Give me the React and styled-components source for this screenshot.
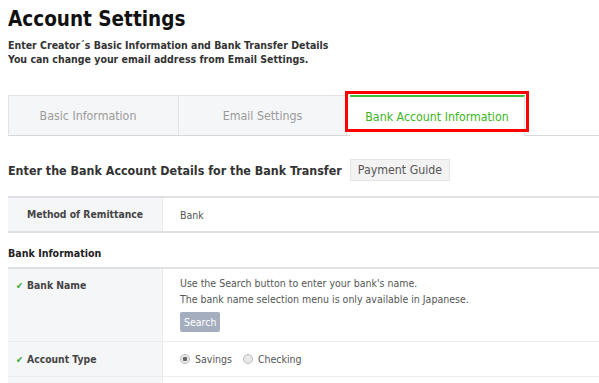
import React from "react";
import styled, { createGlobalStyle } from "styled-components";

const Global = createGlobalStyle`
  body {
    margin: 0;
    background: #fff;
    font-family: "DejaVu Sans Condensed", "DejaVu Sans", Verdana, sans-serif;
    color: #333;
  }
`;

const Page = styled.div`
  padding: 6px 0 0 8px;
`;

const Title = styled.h1`
  margin: 0;
  font-size: 20.5px;
  line-height: 26px;
  font-weight: bold;
  color: #111;
`;

const Lead = styled.p`
  margin: 6px 0 0;
  font-size: 10.5px;
  line-height: 14px;
  font-weight: bold;
  color: #333;
`;

const Tabs = styled.div`
  display: flex;
  margin-top: 29px;
  border-bottom: 1px solid #d6d8dc;
`;

const Tab = styled.div`
  position: relative;
  width: ${(p) => p.$w}px;
  box-sizing: border-box;
  display: flex;
  align-items: center;
  justify-content: center;
  padding-right: ${(p) => (p.$first ? "11px" : "0")};
  font-size: 12.3px;
  background: ${(p) => (p.$active ? "#fff" : "#f5f6f8")};
  color: ${(p) => (p.$active ? "#3cb521" : "#9a9a9a")};
  border: 1px solid #e1e3e6;
  border-left: ${(p) => (p.$first ? "1px solid #e1e3e6" : "none")};
  border-top: ${(p) => (p.$active ? "2px solid #3cc13a" : "1px solid #e1e3e6")};
  border-bottom: none;
  margin-bottom: ${(p) => (p.$active ? "-1px" : "0")};
  height: ${(p) => (p.$active ? "41px" : "40px")};
  margin-left: ${(p) => (p.$active ? "3px" : "0")};
`;

const Highlight = styled.div`
  position: absolute;
  left: -5px;
  right: -5px;
  top: -6px;
  bottom: 4px;
  border: 3px solid #ff0000;
  pointer-events: none;
`;

const SectionHead = styled.div`
  display: flex;
  align-items: center;
  gap: 8px;
  margin-top: 23px;
`;

const H2 = styled.h2`
  margin: 0;
  font-size: 12.4px;
  font-weight: bold;
  color: #333;
`;

const GuideButton = styled.span`
  display: inline-flex;
  align-items: center;
  height: 22px;
  padding: 0 7px;
  box-sizing: border-box;
  background: #f3f3f3;
  border: 1px solid #e6e6e6;
  font-size: 12.3px;
  color: #555;
`;

const Table = styled.div`
  border-top: 2px solid #dfe1e4;
  border-bottom: 2px solid #dfe1e4;
  margin-top: ${(p) => p.$mt}px;
`;

const Row = styled.div`
  display: grid;
  grid-template-columns: 155px 1fr;
  min-height: ${(p) => p.$h}px;
  & + & {
    border-top: 1px solid #ececec;
  }
`;

const Label = styled.div`
  background: #f5f6f8;
  border-right: 1px solid #ececec;
  display: flex;
  align-items: ${(p) => (p.$top ? "flex-start" : "center")};
  justify-content: ${(p) => (p.$center ? "center" : "flex-start")};
  padding: ${(p) => (p.$top ? "10px 0 0 8px" : "0 0 0 8px")};
  padding-left: ${(p) => (p.$center ? "0" : "8px")};
  font-size: 10.3px;
  line-height: 13px;
  font-weight: bold;
  color: #444;
  gap: 2px;
`;

const Check = styled.span`
  color: #2ea82e;
  font-size: 9.5px;
  font-weight: bold;
  width: 9px;
`;

const Value = styled.div`
  padding: ${(p) => (p.$top ? "6px 0 9px 17px" : "0 0 0 17px")};
  display: flex;
  flex-direction: column;
  justify-content: ${(p) => (p.$top ? "flex-start" : "center")};
  font-size: 10.5px;
  line-height: 16px;
  color: #555;
`;

const Note = styled.div`
  line-height: 16px;
`;

const SearchButton = styled.span`
  align-self: flex-start;
  margin-top: 5px;
  height: 20px;
  padding: 0 4px;
  display: inline-flex;
  align-items: center;
  background: #a5aebf;
  color: #fff;
  font-size: 10.5px;
  border-radius: 2px;
`;

const Sub = styled.h3`
  margin: 14px 0 0;
  font-size: 10.6px;
  font-weight: bold;
  color: #222;
`;

const Radios = styled.div`
  display: flex;
  align-items: center;
  gap: 5px;
`;

const Radio = styled.span`
  width: 10px;
  height: 10px;
  border-radius: 50%;
  box-sizing: border-box;
  border: 1px solid #b9b9b9;
  background: ${(p) => (p.$on ? "radial-gradient(circle, #666 0 2px, #e9e9e9 2.5px)" : "#e9e9e9")};
  margin-left: ${(p) => (p.$gap ? "6px" : "0")};
`;

export default function App() {
  return (
    <Page>
      <Global />
      <Title>Account Settings</Title>
      <Lead>
        Enter Creator´s Basic Information and Bank Transfer Details
        <br />
        You can change your email address from Email Settings.
      </Lead>
      <Tabs>
        <Tab $w={171} $first>Basic Information</Tab>
        <Tab $w={168}>Email Settings</Tab>
        <Tab $w={175} $active>
          Bank Account Information
          <Highlight />
        </Tab>
      </Tabs>
      <SectionHead>
        <H2>Enter the Bank Account Details for the Bank Transfer</H2>
        <GuideButton>Payment Guide</GuideButton>
      </SectionHead>
      <Table $mt={15}>
        <Row $h={33}>
          <Label $center>Method of Remittance</Label>
          <Value>Bank</Value>
        </Row>
      </Table>
      <Sub>Bank Information</Sub>
      <Table $mt={8}>
        <Row $h={72}>
          <Label $top>
            <Check>✔</Check>Bank Name
          </Label>
          <Value $top>
            <Note>Use the Search button to enter your bank's name.</Note>
            <Note>The bank name selection menu is only available in Japanese.</Note>
            <SearchButton>Search</SearchButton>
          </Value>
        </Row>
        <Row $h={34}>
          <Label>
            <Check>✔</Check>Account Type
          </Label>
          <Value>
            <Radios>
              <Radio $on />
              Savings
              <Radio $gap />
              Checking
            </Radios>
          </Value>
        </Row>
        <Row $h={33}>
          <Label />
          <Value />
        </Row>
      </Table>
    </Page>
  );
}
